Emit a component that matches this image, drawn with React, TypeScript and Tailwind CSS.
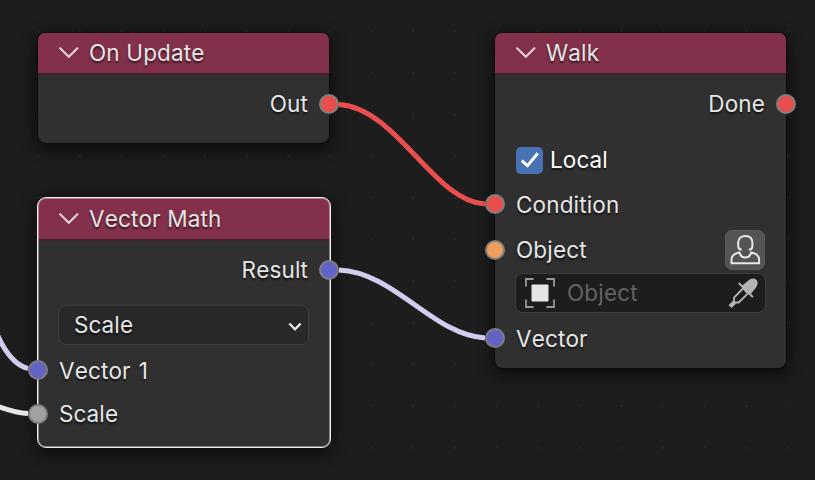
import type { ReactNode } from "react";

const LABEL = "whitespace-pre leading-none [text-shadow:0_2px_2px_rgba(0,0,0,0.6)]";

function Socket({ color, className }: { color: string; className: string }) {
  return (
    <span
      className={`absolute size-[20px] rounded-full border-2 border-[#7f7f7f] ${className}`}
      style={{ backgroundColor: color }}
    />
  );
}

function Header({ title }: { title: string }) {
  return (
    <div className="flex h-[42px] shrink-0 items-center rounded-t-[7px] border-b-2 border-[#431e2b] bg-[#83314a] pl-[21px]">
      <svg width="20" height="12" viewBox="0 0 20 12" fill="none" className="mr-[10px]">
        <path d="M1.2 1.3L9.8 9.7L18.4 1.3" stroke="#e3d5da" strokeWidth="2.1" strokeLinecap="round" />
      </svg>
      <span className={LABEL}>{title}</span>
    </div>
  );
}

function Row({ className, children }: { className: string; children: ReactNode }) {
  return <div className={`relative flex h-[40px] shrink-0 items-center px-[21px] ${className}`}>{children}</div>;
}

const NODE =
  "absolute flex flex-col rounded-[8px] bg-[#303030] shadow-[0_0_0_1px_rgba(0,0,0,0.35),0_4px_14px_4px_rgba(0,0,0,0.5)]";

export default function App() {
  return (
    <main className="relative h-[480px] w-[815px] overflow-hidden bg-[#1d1d1d] font-['Inter',sans-serif] text-[22.5px] tracking-[0.15px] text-[#e6e6e6] [font-kerning:none]">
      <svg className="absolute inset-0" width="815" height="480" fill="none">
        <defs>
          <pattern id="grid" x="37.3" y="30.3" width="41.65" height="41.65" patternUnits="userSpaceOnUse">
            <rect width="2" height="2" fill="#282828" />
          </pattern>
        </defs>
        <rect width="815" height="480" fill="url(#grid)" />
      </svg>

      <section className={`${NODE} left-[38px] top-[33px] h-[110px] w-[291px]`}>
        <Header title="On Update" />
        <Row className="mt-[9px] justify-end">
          <span className={LABEL}>Out</span>
          <Socket color="#e94e4e" className="-right-[10px] top-[10px]" />
        </Row>
      </section>

      <section
        className={`${NODE} left-[38px] top-[198px] h-[249px] w-[292px] pt-px outline-[1px] outline-[#f0f0f0] before:absolute before:inset-0 before:rounded-[8px] before:border before:border-white/40`}
      >
        <div className="-mt-px rounded-t-[7px] bg-[#83314a] pt-px">
          <Header title="Vector Math" />
        </div>
        <Row className="mt-[9px] justify-end pr-[22px]">
          <span className={LABEL}>Result</span>
          <Socket color="#6363c7" className="-right-[9px] top-[10px]" />
        </Row>
        <div className="ml-[20px] mr-[21px] mt-[15px] flex h-[40px] shrink-0 items-center justify-between rounded-[8px] border border-[#3d3d3d] bg-[#282828] pl-[15px] pr-[6px]">
          <span className={LABEL}>Scale</span>
          <svg width="14" height="10" viewBox="0 0 14 10" fill="none" className="mt-[3px]">
            <path d="M1.3 1.5L7 7.4L12.7 1.5" stroke="#e6e6e6" strokeWidth="2.3" />
          </svg>
        </div>
        <Row className="mt-[6px]">
          <span className={`${LABEL} [word-spacing:1.5px]`}>Vector 1</span>
          <Socket color="#6363c7" className="-left-[10px] top-[9px]" />
        </Row>
        <Row className="mt-[3px]">
          <span className={LABEL}>Scale</span>
          <Socket color="#a1a1a1" className="-left-[10px] top-[10px]" />
        </Row>
      </section>

      <section className={`${NODE} left-[495px] top-[33px] h-[335px] w-[291px]`}>
        <Header title="Walk" />
        <Row className="mt-[9px] justify-end">
          <span className={LABEL}>Done</span>
          <Socket color="#e94e4e" className="-right-[10px] top-[10px]" />
        </Row>
        <Row className="mt-[16px] text-white">
          <span className="mr-[7px] flex size-[27px] items-center justify-center rounded-[5px] bg-[#4772b3]">
            <svg width="20" height="18" viewBox="0 0 20 18" fill="none">
              <path d="M1.7 9.7L7.5 14.7L17.7 2.3" stroke="white" strokeWidth="3" />
            </svg>
          </span>
          <span className={LABEL}>Local</span>
        </Row>
        <Row className="mt-[5px]">
          <span className={LABEL}>Condition</span>
          <Socket color="#e94e4e" className="-left-[10px] top-[9px]" />
        </Row>
        <Row className="mt-[5px] justify-between">
          <span className={LABEL}>Object</span>
          <span className="flex size-[40px] items-center justify-center rounded-[7px] border border-[#5a5a5a] bg-[#545454]">
            <svg width="32" height="32" viewBox="0 0 32 32" fill="none" stroke="#e8e8e8" strokeWidth="2">
              <path d="M12.8 15.5H12C9.8 15.5 9.2 13.6 9.2 11.5V8.7C9.2 4.4 12 2 16.3 2C20.6 2 23.4 4.4 23.4 8.7V11.5C23.4 13.6 22.8 15.5 20.6 15.5H19.8" />
              <path d="M10.3 18.4C5.5 19.4 2.5 21.5 2.5 26V29.2H30.1V26C30.1 21.5 27.1 19.4 22.3 18.4C21.3 21.8 19.2 23.5 16.3 23.5C13.4 23.5 11.3 21.8 10.3 18.4Z" />
            </svg>
          </span>
          <Socket color="#ee9e5d" className="-left-[10px] top-[10px]" />
        </Row>
        <div className="mx-[20px] mt-[3px] flex h-[40px] shrink-0 items-center rounded-[8px] border border-[#3d3d3d] bg-[#1d1d1d] pl-[9px] pr-[5px]">
          <svg width="30" height="30" viewBox="0 0 30 30" fill="none" className="mr-[12px]">
            <path d="M1 8.5V1H8.5M21.5 1H29V8.5M29 21.5V29H21.5M8.5 29H1V21.5" stroke="#999999" strokeWidth="1.8" />
            <rect x="6.5" y="6.5" width="17" height="17" rx="1" fill="#e6e6e6" />
          </svg>
          <span className="flex-1 leading-none text-[#636363]">Object</span>
          <svg width="32" height="32" viewBox="0 0 32 32" fill="none">
            <path d="M14 11.5V8.7L20 3.8C23 1.2 26.3 .8 28.3 2.8C30.4 4.9 30 8.2 27.4 11.2L23 16.8L19.6 17.6Z" fill="#b5b5b5" />
            <path d="M11.4 6.6L24.3 19.5" stroke="#b5b5b5" strokeWidth="2" strokeLinecap="round" />
            <path d="M14.5 12L6 20.7V24L1.2 28.8M19.4 16.9L10.7 25.5H7.8L3 30.3M7 24.5L2.1 29.5" stroke="#b5b5b5" strokeWidth="1.8" />
          </svg>
        </div>
        <Row className="mt-[6px]">
          <span className={LABEL}>Vector</span>
          <Socket color="#6363c7" className="-left-[10px] top-[9px]" />
        </Row>
      </section>

      <svg className="absolute inset-0" width="815" height="480" fill="none" strokeWidth="5">
        <path d="M339 104.5C397 108 434 202 485 204" stroke="#e94e4e" />
        <path d="M339 270C394 272 433 335 485 338" stroke="#d0cdef" />
        <path d="M-3 334C4 350 14 365 28 368.5" stroke="#d0cdef" />
        <path d="M-3 406C8 410 17 413 28 413.5" stroke="#e6e6e6" />
      </svg>
    </main>
  );
}
